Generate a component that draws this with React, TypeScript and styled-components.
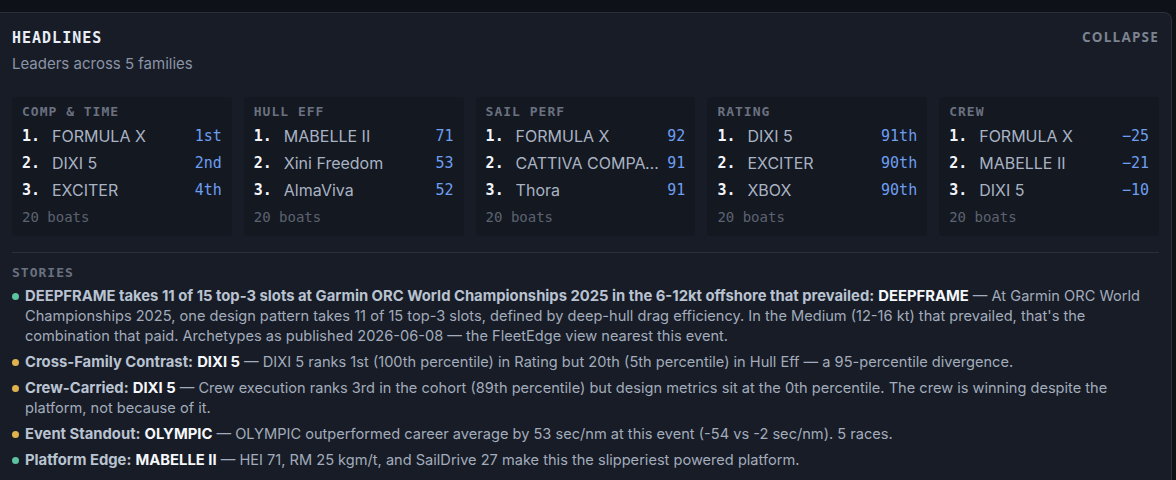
import { FunctionComponent } from 'react'
import styled, { createGlobalStyle } from 'styled-components'

const GlobalStyle = createGlobalStyle`
  html, body {
    margin: 0;
    background: #0e1117;
  }
  body {
    font-family: Inter, "Noto Sans", sans-serif;
    -webkit-font-smoothing: antialiased;
  }
`

const mono = `"DejaVu Sans Mono", "Liberation Mono", monospace`

const Page = styled.div`
  padding: 12px 4px 0 0;
`

const Panel = styled.section`
  background: #181c26;
  border: 1px solid #2a2f3a;
  border-left: none;
  border-radius: 0 8px 0 0;
  padding: 16px 12px 20px 12px;
  min-height: 460px;
  box-sizing: border-box;
`

const Header = styled.header`
  display: flex;
  justify-content: space-between;
  align-items: flex-start;
`

const Title = styled.h2`
  margin: 0;
  font-family: ${mono};
  font-size: 15px;
  line-height: 18px;
  font-weight: 700;
  letter-spacing: 1px;
  color: #e9eef6;
`

const Subtitle = styled.div`
  margin-top: 7px;
  font-size: 15px;
  line-height: 20px;
  color: #8a94a7;
`

const CollapseButton = styled.button`
  border: none;
  background: none;
  padding: 0;
  margin: -1px 0 0;
  font-family: "Open Sans", sans-serif;
  font-size: 13.5px;
  line-height: 18px;
  font-weight: 700;
  letter-spacing: 1.2px;
  color: #7b8391;
  cursor: pointer;
`

const Cards = styled.div`
  display: grid;
  grid-template-columns: repeat(5, 1fr);
  gap: 12px;
  margin-top: 23px;
`

const Card = styled.div`
  background: #141821;
  border-radius: 4px;
  padding: 7px 10px 10px 10px;
`

const SectionLabel = styled.div`
  font-family: ${mono};
  font-size: 13px;
  line-height: 16px;
  font-weight: 700;
  letter-spacing: 1px;
  color: #6a7180;
`

const Rows = styled.ol`
  list-style: none;
  margin: 2px 0 0;
  padding: 0;
`

const Row = styled.li`
  display: grid;
  grid-template-columns: 30px minmax(0, 1fr) auto;
  align-items: center;
  height: 27px;
`

const Rank = styled.span`
  font-family: ${mono};
  font-size: 15px;
  font-weight: 700;
  color: #f2f5fa;
`

const Boat = styled.span`
  font-size: 16px;
  color: #a9b3c3;
  white-space: nowrap;
  overflow: hidden;
  text-overflow: ellipsis;
  padding-right: 8px;
`

const Value = styled.span`
  font-family: ${mono};
  font-size: 15px;
  color: #6d9ef0;
  text-align: right;
`

const Count = styled.div`
  margin-top: 5px;
  font-family: ${mono};
  font-size: 14px;
  line-height: 18px;
  color: #5c6370;
`

const Divider = styled.hr`
  border: none;
  border-top: 1px solid #2a303b;
  margin: 16px 0 12px;
`

const Stories = styled.ul`
  list-style: none;
  margin: 5px 0 0;
  padding: 0;
  display: flex;
  flex-direction: column;
  gap: 6px;
`

const Story = styled.li<{ tone: 'teal' | 'amber' }>`
  position: relative;
  padding-left: 13px;
  font-size: 14.6px;
  line-height: 20px;
  color: #a2acbc;

  &:before {
    content: "";
    position: absolute;
    left: 0;
    top: 6.5px;
    width: 7px;
    height: 7px;
    border-radius: 50%;
    background: ${({ tone }) => (tone === 'teal' ? '#5cc2a0' : '#e0b14f')};
  }
`

const Lead = styled.strong`
  font-size: 14.8px;
  font-weight: 700;
  color: #b9c3d1;
`

const Subject = styled.strong`
  font-size: 14.8px;
  font-weight: 700;
  color: #f4f7fb;
`

interface Leader {
  name: string
  value: string
}

interface Family {
  label: string
  leaders: Leader[]
}

const families: Family[] = [
  {
    label: 'COMP & TIME',
    leaders: [
      { name: 'FORMULA X', value: '1st' },
      { name: 'DIXI 5', value: '2nd' },
      { name: 'EXCITER', value: '4th' },
    ],
  },
  {
    label: 'HULL EFF',
    leaders: [
      { name: 'MABELLE II', value: '71' },
      { name: 'Xini Freedom', value: '53' },
      { name: 'AlmaViva', value: '52' },
    ],
  },
  {
    label: 'SAIL PERF',
    leaders: [
      { name: 'FORMULA X', value: '92' },
      { name: 'CATTIVA COMPAGNIA', value: '91' },
      { name: 'Thora', value: '91' },
    ],
  },
  {
    label: 'RATING',
    leaders: [
      { name: 'DIXI 5', value: '91th' },
      { name: 'EXCITER', value: '90th' },
      { name: 'XBOX', value: '90th' },
    ],
  },
  {
    label: 'CREW',
    leaders: [
      { name: 'FORMULA X', value: '−25' },
      { name: 'MABELLE II', value: '−21' },
      { name: 'DIXI 5', value: '−10' },
    ],
  },
]

interface StoryItem {
  tone: 'teal' | 'amber'
  lead: string
  subject: string
  body: string
}

const stories: StoryItem[] = [
  {
    tone: 'teal',
    lead: 'DEEPFRAME takes 11 of 15 top-3 slots at Garmin ORC World Championships 2025 in the 6-12kt offshore that prevailed:',
    subject: 'DEEPFRAME',
    body: "At Garmin ORC World Championships 2025, one design pattern takes 11 of 15 top-3 slots, defined by deep-hull drag efficiency. In the Medium (12-16 kt) that prevailed, that's the combination that paid. Archetypes as published 2026-06-08 — the FleetEdge view nearest this event.",
  },
  {
    tone: 'amber',
    lead: 'Cross-Family Contrast:',
    subject: 'DIXI 5',
    body: 'DIXI 5 ranks 1st (100th percentile) in Rating but 20th (5th percentile) in Hull Eff — a 95-percentile divergence.',
  },
  {
    tone: 'amber',
    lead: 'Crew-Carried:',
    subject: 'DIXI 5',
    body: 'Crew execution ranks 3rd in the cohort (89th percentile) but design metrics sit at the 0th percentile. The crew is winning despite the platform, not because of it.',
  },
  {
    tone: 'amber',
    lead: 'Event Standout:',
    subject: 'OLYMPIC',
    body: 'OLYMPIC outperformed career average by 53 sec/nm at this event (-54 vs -2 sec/nm). 5 races.',
  },
  {
    tone: 'teal',
    lead: 'Platform Edge:',
    subject: 'MABELLE II',
    body: 'HEI 71, RM 25 kgm/t, and SailDrive 27 make this the slipperiest powered platform.',
  },
]

const FamilyCard: FunctionComponent<{ family: Family }> = ({ family }) => (
  <Card>
    <SectionLabel>{family.label}</SectionLabel>
    <Rows>
      {family.leaders.map((leader, i) => (
        <Row key={leader.name + i}>
          <Rank>{i + 1}.</Rank>
          <Boat>{leader.name}</Boat>
          <Value>{leader.value}</Value>
        </Row>
      ))}
    </Rows>
    <Count>20 boats</Count>
  </Card>
)

const App: FunctionComponent = () => {
  return (
    <Page>
      <GlobalStyle />
      <Panel>
        <Header>
          <div>
            <Title>HEADLINES</Title>
            <Subtitle>Leaders across 5 families</Subtitle>
          </div>
          <CollapseButton>COLLAPSE</CollapseButton>
        </Header>
        <Cards>
          {families.map((family) => (
            <FamilyCard key={family.label} family={family} />
          ))}
        </Cards>
        <Divider />
        <SectionLabel>STORIES</SectionLabel>
        <Stories>
          {stories.map((story, i) => (
            <Story key={i} tone={story.tone}>
              <Lead>{story.lead}</Lead> <Subject>{story.subject}</Subject> — {story.body}
            </Story>
          ))}
        </Stories>
      </Panel>
    </Page>
  )
}

export default App
